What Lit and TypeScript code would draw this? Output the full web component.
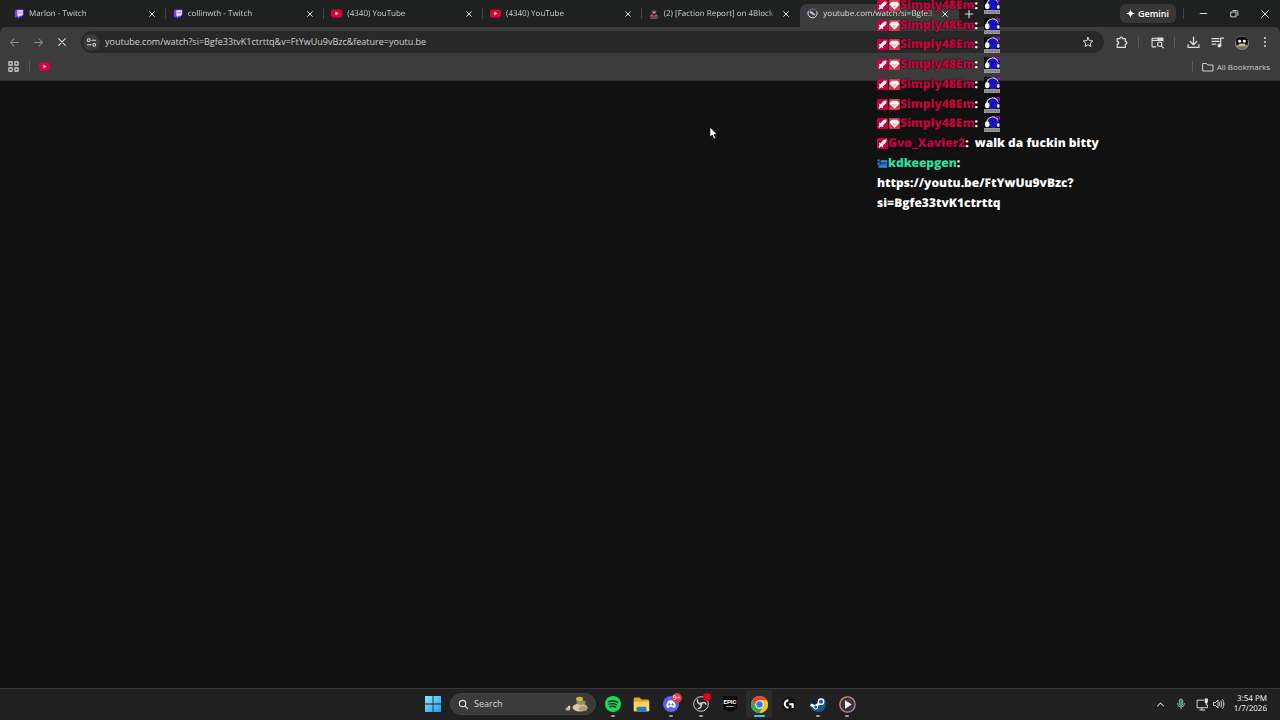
import { LitElement, html, svg, css } from "lit";
import { customElement, state } from "lit/decorators.js";

const icon = (size: number, body: unknown, box = 24, cls = "") =>
  html`<svg class="ico ${cls}" width=${size} height=${size} viewBox="0 0 ${box} ${box}" aria-hidden="true">${body}</svg>`;

const line = (d: string, w = 2) =>
  svg`<path d=${d} fill="none" stroke="currentColor" stroke-width=${w} stroke-linecap="round" stroke-linejoin="round"/>`;

const closeIcon = (size: number) => icon(size, line("M5 5L19 19M19 5L5 19", 3));

const twitch = () => icon(10, svg`
  <path d="M6 1H23V14L17 20H13L9 24V20H2V5Z" fill="#7a3ff0"/>
  <path d="M8 3H21V13L18 16H13L10 19V16H8Z" fill="#efe6ff"/>
  <path d="M12 6.500V11M17 6.500V11" stroke="#7a3ff0" stroke-width="2.200"/>`);

const youtube = () => icon(11, svg`
  <rect x="0" y="3" width="24" height="18" rx="5" fill="#dc003c"/>
  <path d="M9.500 8L16.500 12L9.500 16Z" fill="#fff"/>`);

const faction = () => icon(10, svg`
  <path d="M6 6Q12 0 18 6L16 11H8Z" fill="#9a4658"/>
  <path d="M1 16L8 12L12 15L16 12L23 16V20H1Z" fill="#8c3448"/>
  <path d="M3 22H21M5 14L10 18M19 14L14 18" stroke="#c9a0a8" stroke-width="1.600"/>
  <circle cx="12" cy="9" r="2" fill="#ddd"/>`);

const loading = () => icon(11, svg`
  <circle cx="12" cy="12" r="10" fill="none" stroke="#777b86" stroke-width="2"/>
  <path d="M3 7A10 10 0 1 0 21 7" fill="none" stroke="#d0d5e2" stroke-width="2"/>
  <path d="M6 6L12 8L18 14L16 17L10 13L6 11Z" fill="#b8bfd4"/>`);

const tabs = [
  { title: "Marlon - Twitch", fav: twitch },
  { title: "collinwth - Twitch", fav: twitch },
  { title: "(4340) YouTube", fav: youtube },
  { title: "(4340) YouTube", fav: youtube },
  { title: "(2) [Faction Report] on 4Block |", fav: faction },
  { title: "youtube.com/watch?si=Bgfe33", fav: loading, active: true },
];

const swordBadge = () => icon(11, svg`
  <rect width="24" height="24" rx="3" fill="#c4003f"/>
  <path d="M21 3L20 9L12 17L14 19L12 20L9 18L5 21L3 19L6 15L4 12L5 10L7 12L15 4Z" fill="#fff"/>`);
const gemBadge = () => icon(11, svg`
  <rect width="24" height="24" rx="2" fill="#d8344c"/>
  <path d="M6 4H18L23 10L12 21L1 10Z" fill="#fff"/>
  <path d="M5 11H19L12 18Z" fill="#f7c4c8"/>`);
const modBadge = () => icon(11, svg`
  <path d="M1 3H5V7H1ZM8 5H22V10H8ZM1 10H6V14H1ZM8 12H22V15H8ZM3 16H22V21H3Z" fill="#2f8cf0"/>
  <path d="M6 4V21M1 15H22" stroke="#1c5cb0" stroke-width="1.500"/>`);
const emote = () => icon(16, svg`
  <rect width="16" height="13" fill="#08080c"/>
  <path d="M12 0H16V4L13 3Z" fill="#8a12a0"/>
  <path d="M3 7A5.500 5.500 0 0 1 14 6" fill="none" stroke="#cfcfff" stroke-width="1.200"/>
  <ellipse cx="9" cy="7" rx="5.200" ry="5.300" fill="#1b12c8"/>
  <ellipse cx="3.200" cy="8.300" rx="2.300" ry="3" fill="#f4f4ff"/>
  <ellipse cx="14.300" cy="9" rx="1.400" ry="2" fill="#e4e4fa"/>
  <circle cx="8.500" cy="6" r=".8" fill="#06063c"/><circle cx="11.500" cy="6" r=".8" fill="#06063c"/>
  <rect y="12" width="16" height="4" fill="#999"/>
  <path d="M1 14H15" stroke="#666" stroke-dasharray="2 1"/>`, 16);

interface Message { user: string; badges: (() => unknown)[]; tone: string; text?: string; emote?: boolean; tall?: boolean }
const repeated: Message = { user: "Simply48Em", badges: [swordBadge, gemBadge], tone: "red", emote: true };
const messages: Message[] = [
  ...Array.from({ length: 7 }, () => repeated),
  { user: "Gvo_Xavier2", badges: [swordBadge], tone: "red", text: "walk da fuckin bitty" },
  { user: "kdkeepgen", badges: [modBadge], tone: "green", text: "https://youtu.be/FtYwUu9vBzc?si=Bgfe33tvK1ctrttq", tall: true },
];

@customElement("chat-overlay")
export class ChatOverlay extends LitElement {
  static styles = css`
    :host { display: block; font: 800 12px/20px "Open Sans", "Noto Sans", sans-serif; color: #fff; text-rendering: geometricPrecision; }
    .list { display: grid; grid-auto-rows: 1fr; height: 217px; margin: 0; padding: 0; list-style: none; }
    .msg { min-height: 0; white-space: nowrap; text-shadow: 0 0 2px #000; }
    .tall { grid-row: span 3; white-space: normal; overflow-wrap: break-word; }
    .ico { vertical-align: -2px; }
    .ico + .ico { margin-left: 1px; }
    .face { display: inline-block; margin-left: 6px; vertical-align: -5px; }
    .face .ico { display: block; }
    .red { color: #c4043c; }
    .green { color: #2be0a0; }
    .text { margin-left: 6px; }
    .url { display: block; }
  `;
  render() {
    return html`<ul class="list">${messages.map((m) => html`
      <li class="msg ${m.tall ? "tall" : ""}">${m.badges.map((b) => b())}<span class=${m.tone}>${m.user}</span>:${
        m.emote ? html`<span class="face">${emote()}</span>` : m.tall
          ? html`<span class="url">${m.text}</span>`
          : html`<span class="text">${m.text}</span>`}</li>`)}</ul>`;
  }
}

const spotify = () => icon(16, svg`<circle cx="12" cy="12" r="12" fill="#1ed760"/>${[
  "M5.500 8.500Q12 6 19 9.500", "M6 12.300Q12 10.300 17.500 13.200", "M7 16Q12 14.500 16 16.700"].map((d) =>
  svg`<path d=${d} fill="none" stroke="#14271b" stroke-width="2" stroke-linecap="round"/>`)}`);
const folder = () => icon(17, svg`
  <path d="M1 4Q1 2 3 2H9L12 5H21Q23 5 23 7V10H1Z" fill="#e2a51d"/>
  <path d="M1 8H21Q23 8 23 10V20Q23 22 21 22H3Q1 22 1 20Z" fill="#ffd35c"/>
  <path d="M5 22V17Q5 15 7 15H17Q19 15 19 17V22Z" fill="#1a7fd0"/>`);
const discord = () => html`${icon(16, svg`
  <circle cx="12" cy="12" r="12" fill="#5865f2"/>
  <path d="M8 7Q12 6 16 7Q19 11 19 16Q17 18 15 18L14 16H10L9 18Q7 18 5 16Q5 11 8 7Z" fill="#fff"/>
  <ellipse cx="9.500" cy="12.500" rx="1.500" ry="1.800" fill="#5865f2"/><ellipse cx="14.500" cy="12.500" rx="1.500" ry="1.800" fill="#5865f2"/>`)}<span class="badge count">9+</span>`;
const obs = () => html`${icon(16, svg`
  <circle cx="12" cy="12" r="11" fill="#24242a" stroke="#c8c8c8" stroke-width="1.500"/>
  <path d="M12 12Q5 11 7 5M12 12Q17 7 20 13M12 12Q14 18 7 19" fill="none" stroke="#d0d0d0" stroke-width="2"/>
  <circle cx="12" cy="12" r="2.500" fill="#c8c8c8"/>`)}<span class="badge dot"></span>`;
const epic = () => html`<span class="epic">EPIC<i class="bar"></i></span>`;
const chrome = () => icon(17, svg`
  <circle cx="12" cy="12" r="12" fill="#fbc116"/>
  <path d="M1.600 6A12 12 0 0 1 22.400 6H12L7 14.500Z" fill="#e94235"/>
  <path d="M1.600 6A12 12 0 0 0 12 24L17.200 15A6 6 0 0 1 6.800 15Z" fill="#31a650"/>
  <path d="M12 6H22.400A12 12 0 0 1 12 24L17.200 15A6 6 0 0 0 12 6Z" fill="#fbc116"/>
  <circle cx="12" cy="12" r="6" fill="#fff"/><circle cx="12" cy="12" r="4.600" fill="#2f7de9"/>`);
const ghub = () => icon(14, svg`
  <circle cx="12" cy="12" r="12" fill="#141414"/>
  <path d="M11 4A8 8 0 0 0 11 20V16.500A4.500 4.500 0 0 1 11 7.500Z" fill="#fff"/>
  <path d="M12.500 10.500H20V19H16.500V14H12.500Z" fill="#fff"/>`);
const steam = () => icon(16, svg`
  <circle cx="12" cy="12" r="12" fill="#155a90"/><path d="M0 12A12 12 0 0 1 20 3L9 13Z" fill="#14233c"/>
  <path d="M1 13L8 16L16 9" stroke="#fff" stroke-width="4" fill="none"/>
  <circle cx="16.500" cy="8.500" r="4" fill="#155a90" stroke="#fff" stroke-width="2"/>
  <circle cx="8.500" cy="16.500" r="3" fill="#155a90" stroke="#fff" stroke-width="1.500"/>`);
const player = () => icon(17, svg`
  <defs><linearGradient id="ring" x2="1" y2="1"><stop stop-color="#f08a4c"/><stop offset="1" stop-color="#9a78c8"/></linearGradient></defs>
  <circle cx="12" cy="12" r="10.800" fill="#38343c" stroke="url(#ring)" stroke-width="2"/>
  <path d="M8.500 6L18 12L8.500 18Z" fill="#fff"/>`);

const apps = [
  { name: "Spotify", draw: spotify, open: true },
  { name: "File Explorer", draw: folder },
  { name: "Discord", draw: discord, open: true },
  { name: "OBS Studio", draw: obs, open: true },
  { name: "Epic Games", draw: epic },
  { name: "Google Chrome", draw: chrome, active: true },
  { name: "G HUB", draw: ghub },
  { name: "Steam", draw: steam, open: true },
  { name: "Media Player", draw: player, open: true },
];

@customElement("task-bar")
export class TaskBar extends LitElement {
  static styles = css`
    :host { display: block; background: #202020; border-top: 1px solid #383838; font: 9px/11px "Open Sans", sans-serif; color: #fff; text-rendering: geometricPrecision; }
    .bar-row { display: grid; grid-template-columns: 1fr auto 1fr; align-items: center; height: 31px; box-sizing: border-box; padding: 0 0 1px 7px; }
    .mid { grid-column: 2; display: flex; align-items: center; }
    button { position: relative; display: grid; place-items: center; border: 0; padding: 0; background: none; color: inherit; font: inherit; }
    .ico { display: block; }
    .start { width: 16px; height: 30px; margin-right: 9px; }
    .search { display: flex; align-items: center; gap: 5px; width: 146px; height: 22px; box-sizing: border-box; padding: 0 7px; border-radius: 11px; background: #3b3b3b; border: 1px solid #434343; margin-right: 2px; color: #e4e4e4; }
    .search input { flex: 1; min-width: 0; border: 0; padding: 0; background: none; color: inherit; font: 9px/16px "Open Sans", sans-serif; outline: 0; }
    .search input::placeholder { color: #d8d8d8; opacity: 1; }
    .apps { display: grid; grid-template-columns: repeat(9, 1fr); width: 264px; }
    .app { height: 30px; }
    .active { background: #2b2b2b; border-radius: 3px; width: 26px; height: 28px; justify-self: center; align-self: center; }
    .open::after, .active::after { content: ""; position: absolute; bottom: 2px; width: 4px; height: 2px; border-radius: 1px; background: #999; }
    .active::after { width: 11px; bottom: 1px; background: #4cc2e8; }
    .badge { position: absolute; top: 4px; left: 15px; border-radius: 50%; background: #e0383f; }
    .count { width: 10px; height: 10px; font-size: 7px; line-height: 10px; text-align: center; }
    .dot { left: 17px; width: 8px; height: 8px; background: #e00010; }
    .epic { width: 14px; height: 16px; box-sizing: border-box; padding-top: 2px; font: 700 6px/7px "Roboto", sans-serif; background: #0a0a0a; clip-path: polygon(0 0, 100% 0, 100% 82%, 50% 100%, 0 82%); text-align: center; }
    .bar { display: block; height: 1px; margin: 1px 3px; background: #999; }
    .tray { display: flex; align-items: center; justify-content: flex-end; padding-right: 13px; color: #ddd; }
    .chev { margin-right: 10px; } .mic { margin-right: 9px; color: #8fc4b4; } .net { margin-right: 4px; }
    .clock { width: 37px; margin-left: 5px; font-size: 8px; line-height: 10px; text-align: right; color: #fff; white-space: nowrap; }
  `;
  render() {
    return html`<nav class="bar-row" aria-label="Taskbar">
      <div class="mid">
        <button class="start" aria-label="Start">${icon(16, svg`
          <defs><linearGradient id="win" x2="1" y2="1"><stop stop-color="#8be6ff"/><stop offset="1" stop-color="#1a9ff0"/></linearGradient></defs>
          <path d="M0 0H11.400V11.400H0ZM12.600 0H24V11.400H12.600ZM0 12.600H11.400V24H0ZM12.600 12.600H24V24H12.600Z" fill="url(#win)"/>`)}</button>
        <label class="search">${icon(11, line("M17 10A7 7 0 1 1 3 10A7 7 0 0 1 17 10M15.500 15.500L21 21", 2.4))}
          <input type="text" placeholder="Search" aria-label="Search">
          <svg class="ico" width="23" height="16" viewBox="0 0 23 16" aria-hidden="true">
            <ellipse cx="3" cy="13" rx="2.500" ry="1.800" fill="#c7b28e"/><circle cx="4" cy="11" r="1.300" fill="#e3d5bd"/>
            <ellipse cx="15" cy="11.500" rx="7.500" ry="4" fill="#d9c8a8"/><ellipse cx="18" cy="12.500" rx="4.500" ry="2.500" fill="#b39a78"/>
            <ellipse cx="16" cy="6.500" rx="4.500" ry="2.300" fill="#8f955f"/><ellipse cx="14.500" cy="3" rx="3.500" ry="2.200" fill="#d8b640"/>
          </svg></label>
        <div class="apps">${apps.map((a) => html`<button class="app ${a.active ? "active" : ""} ${a.open ? "open" : ""}" aria-label=${a.name}>${a.draw()}</button>`)}</div>
      </div>
      <div class="tray">
        <button class="chev" aria-label="Hidden icons">${icon(9, line("M4 16L12 8L20 16", 2.8))}</button>
        <button class="mic" aria-label="Microphone">${icon(12, svg`<rect x="8.500" y="2" width="7" height="13" rx="3.500" fill="#3c8c78" stroke="currentColor" stroke-width="1.500"/>${line("M5 11Q5 18 12 18Q19 18 19 11M12 18V22", 1.8)}`)}</button>
        <button class="net" aria-label="Network">${icon(13, svg`${line("M14 4H2V18H21V13M7 22H16M11 18V22", 1.8)}<path d="M16 1H22V8L20 10V13H18V10L16 8Z" fill="currentColor"/>`)}</button>
        <button class="vol" aria-label="Volume">${icon(12, line("M1 9V15H5L10 20V4L5 9ZM13 9Q15 12 13 15M16 6Q20 12 16 18M19 3Q25 12 19 21", 1.8))}</button>
        <time class="clock">3:54 PM<br>1/7/2026</time>
      </div>
    </nav>`;
  }
}

@customElement("app-root")
export class AppRoot extends LitElement {
  static styles = css`
    :host { display: flex; flex-direction: column; height: 100vh; position: relative; overflow: hidden; background: #111; color: #dedede; font: 9px/12px "Open Sans", "Noto Sans", sans-serif; text-rendering: geometricPrecision; }
    button { display: grid; place-items: center; border: 0; padding: 0; background: none; color: inherit; font: inherit; flex: none; }
    .ico { display: block; flex: none; }
    .strip { display: flex; height: 27px; padding-left: 7px; background: #1f2020; align-items: center; }
    .tabs { display: flex; flex: 0 1 952px; height: 27px; min-width: 0; }
    .tab { position: relative; flex: 1 1 0; min-width: 0; display: flex; align-items: center; gap: 4px; padding: 0 8px 0 7px; color: #d0d0d0; }
    .tab .label { flex: 1; min-width: 0; margin-left: 1px; overflow: hidden; white-space: nowrap; mask-image: linear-gradient(90deg, #000 calc(100% - 8px), transparent); font-size: 8px; }
    .tab + .tab:not(.active)::before { content: ""; position: absolute; left: -1px; top: 8px; width: 1px; height: 11px; background: #454545; }
    .tab.active { background: #3c3c3c; border-radius: 7px 7px 0 0; margin-top: 4px; padding-bottom: 4px; color: #dcdcdc; }
    .tab .x, .tool { width: 12px; height: 12px; color: #ddd; }
    .new { width: 20px; }
    .win { display: flex; align-items: center; margin-left: auto; padding-right: 7px; }
    .gemini { display: flex; align-items: center; gap: 3px; height: 19px; padding: 0 7px 0 6px; border-radius: 6px; background: #373737; color: #fff; font-weight: 600; }
    .sep { width: 1px; height: 11px; background: #5a5a5a; flex: none; }
    .win .sep { margin: 0 11px 0 7px; background: #444; }
    .ctl { width: 16px; height: 16px; margin-right: 15px; }
    .ctl:last-child { margin-right: 0; }
    .toolbar { display: flex; align-items: center; height: 30px; padding: 0 9px 0 8px; background: #3c3c3c; border-radius: 6px 6px 0 0; }
    .back { background: #1f2020; }
    .toolbar .nav { width: 12px; height: 16px; margin-right: 12px; }
    .toolbar .dim { color: #8a8a8a; }
    .omni { flex: 1; display: flex; align-items: center; height: 22px; box-sizing: border-box; padding: 0 10px 0 2px; border-radius: 11px; background: #282828; margin-left: 1px; }
    .site { width: 17px; height: 17px; border-radius: 50%; background: #3a3a3a; margin-right: 5px; }
    .omni input { flex: 1; min-width: 0; border: 0; padding: 0; background: none; color: #d2d2d2; outline: 0; font: 9px/16px "Open Sans", "Noto Sans", sans-serif; }
    .acts { display: flex; align-items: center; gap: 12px; margin-left: 11px; color: #d0d0d0; }
    .acts .sep { margin-left: -1px; }
    .marks { display: flex; align-items: center; height: 24px; padding: 0 10px 4px 7px; box-sizing: border-box; background: #3c3c3c; color: #d0d0d0; border-bottom: 1px solid #333; }
    .marks .sep { margin: 0 9px 0 10px; }
    .marks .all { display: flex; align-items: center; gap: 3px; font-size: 8px; }
    .push { flex: 1; }
    .page { flex: 1; }
    chat-overlay { position: absolute; top: -5px; right: 153px; width: 250px; }
    .cursor { position: absolute; top: 126px; left: 709px; }
  `;

  @state() private url = "youtube.com/watch?si=Bgfe33tvK1ctrttq&v=FtYwUu9vBzc&feature=youtu.be";

  render() {
    return html`
      <header class="strip">
        <div class="tabs">${tabs.map((t) => html`<div class="tab ${t.active ? "active" : ""}">${t.fav()}<span class="label">${t.title}</span><button class="x" aria-label="Close tab">${closeIcon(8)}</button></div>`)}</div>
        <button class="new" aria-label="New tab">${icon(10, line("M12 3V21M3 12H21", 2.6))}</button>
        <div class="win">
          <button class="gemini">${icon(9, svg`<path d="M12 0Q13 11 24 12Q13 13 12 24Q11 13 0 12Q11 11 12 0Z" fill="#fff"/><circle cx="12" cy="12" r="4.500" fill="#fff"/>`)}Gemini</button>
          <i class="sep"></i>
          <button class="ctl" aria-label="Minimize">${icon(9, line("M3 12H21", 2.8))}</button>
          <button class="ctl" aria-label="Restore">${icon(9, line("M3 8H16V21H3ZM8 4H17Q21 4 21 8V17", 2.4))}</button>
          <button class="ctl" aria-label="Close">${icon(10, line("M4 4L20 20M20 4L4 20", 2.4))}</button>
        </div>
      </header>
      <div class="back"><div class="toolbar">
        <button class="nav dim" aria-label="Back">${icon(11, line("M21 12H4M11 4L3 12L11 20", 2.2))}</button>
        <button class="nav dim" aria-label="Forward">${icon(11, line("M3 12H20M13 4L21 12L13 20", 2.2))}</button>
        <button class="nav" aria-label="Stop loading">${icon(10, line("M4 4L20 20M20 4L4 20", 2.6))}</button>
        <div class="omni">
          <button class="site" aria-label="Site information">${icon(11, line("M13 7H21M9 7A3 3 0 1 1 3 7A3 3 0 0 1 9 7M3 17H11M21 17A3 3 0 1 1 15 17A3 3 0 0 1 21 17", 2.2))}</button>
          <input type="text" aria-label="Address" .value=${this.url} @input=${(e: Event) => (this.url = (e.target as HTMLInputElement).value)}>
          <button class="tool" aria-label="Bookmark this tab">${icon(12, line("M12 3L14.700 9.200L21.500 9.900L16.400 14.400L17.900 21L12 17.500L6.100 21L7.600 14.400L2.500 9.900L9.300 9.200Z", 2))}</button>
        </div>
        <div class="acts">
          <button class="tool" aria-label="Extensions">${icon(13, line("M4 5H9Q9 2 11.500 2Q14 2 14 5H19V10Q22 10 22 12.500Q22 15 19 15V21H4V15Q7 15 7 12.500Q7 10 4 10Z", 2.2))}</button>
          <i class="sep"></i>
          <button class="tool" aria-label="Search this page">${icon(13, svg`${line("M9 20H2V4H22V9M2 8H22", 2)}${line("M20 15A4 4 0 1 1 12 15A4 4 0 0 1 20 15M19 18L23 22", 2)}<path d="M12 3H22V8H12Z" fill="currentColor"/>`)}</button>
          <i class="sep"></i>
          <button class="tool" aria-label="Downloads">${icon(13, line("M12 2V15M6 10L12 16L18 10M2 16V21H22V16", 2.4))}</button>
          <button class="tool" aria-label="Media controls">${icon(13, svg`${line("M2 5H15M2 10H15M2 15H9M18 17V4H23", 2.2)}<circle cx="15.500" cy="17.500" r="3.500" fill="currentColor"/>`)}</button>
          <button class="tool" aria-label="Profile">${icon(14, svg`<circle cx="12" cy="12" r="12" fill="#8f8a7c"/><path d="M2 5Q12 -3 22 5V15H2Z" fill="#0b0b0b"/><circle cx="8" cy="9" r="2.500" fill="#fff"/><circle cx="16" cy="9" r="2.500" fill="#fff"/><path d="M7 13H17V17H7Z" fill="#d99b48"/><path d="M7 15H17" stroke="#fff"/><path d="M5 19H19L16 23H8Z" fill="#5f7a5a"/>`)}</button>
          <button class="tool" aria-label="Menu">${icon(12, svg`<circle cx="12" cy="4" r="2" fill="currentColor"/><circle cx="12" cy="12" r="2" fill="currentColor"/><circle cx="12" cy="20" r="2" fill="currentColor"/>`)}</button>
        </div>
      </div></div>
      <nav class="marks" aria-label="Bookmarks">
        <button class="tool" aria-label="Apps">${icon(11, line("M2 2H9V9H2ZM15 2H22V9H15ZM2 15H9V22H2ZM15 15H22V22H15Z", 2.4))}</button>
        <i class="sep"></i>
        <button aria-label="YouTube">${youtube()}</button>
        <span class="push"></span>
        <i class="sep"></i>
        <button class="all">${icon(12, line("M2 5H9L11.500 8H22V20H2Z", 2))}All Bookmarks</button>
      </nav>
      <main class="page"></main>
      <task-bar></task-bar>
      <chat-overlay></chat-overlay>
      <svg class="cursor" width="9" height="14" viewBox="0 0 9 14" aria-hidden="true"><path d="M1 1V11L3.300 9L5 13L6.600 12.300L5 8.500H8Z" fill="#fff" stroke="#000" stroke-width=".6"/></svg>
    `;
  }
}
